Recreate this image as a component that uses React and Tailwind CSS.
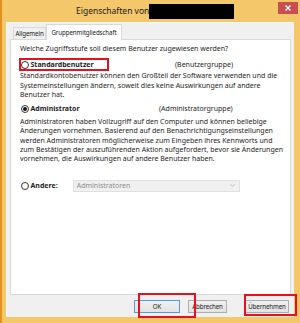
import React from 'react';

const FONT = "font-['Noto_Sans',sans-serif]";

function Radio({ checked }) {
  return (
    <span className="w-[8px] h-[8px] rounded-full border border-[#333] bg-white flex items-center justify-center shrink-0">
      {checked && <span className="w-[4px] h-[4px] rounded-full bg-[#111]" />}
    </span>
  );
}

function Button({ children, primary, w }) {
  return (
    <div
      className={`h-[13px] ${w} flex items-center justify-center text-[6.2px] tracking-[-0.1px] whitespace-nowrap text-[#1a1a1a] bg-gradient-to-b from-[#f0f0f0] to-[#e3e3e3] border ${
        primary ? 'border-[#4f9be6]' : 'border-[#adadad]'
      }`}
    >
      {children}
    </div>
  );
}

export default function App() {
  return (
    <div className={`relative w-[300px] h-[323px] overflow-hidden bg-[#f4c76b] border-l-2 border-[#e3921f] flex flex-col ${FONT}`}>
      {/* Titelleiste */}
      <div className="h-[22px] flex items-start shrink-0">
        <div className="w-[74px]" />
        <span className="mt-[4px] text-[8.5px] leading-[14px] text-[#1a1a1a] whitespace-nowrap">Eigenschaften von</span>
        <div className="mt-[4px] w-[85px] h-[15px] bg-black" />
        <div className="flex-1" />
        <div className="mt-[2px] mr-[2px] w-[20px] h-[12px] bg-[#c84f4f] flex items-center justify-center">
          <svg width="6" height="6" viewBox="0 0 6 6">
            <path d="M0.5 0.5 L5.5 5.5 M5.5 0.5 L0.5 5.5" stroke="white" strokeWidth="1.3" />
          </svg>
        </div>
      </div>

      {/* Client-Bereich */}
      <div className="flex-1 ml-[4px] mr-[6px] mb-[6px] bg-[#f0f0f0] border-t border-l border-[#f9f9f9] flex flex-col px-[3px]">
        {/* Reiter */}
        <div className="flex items-end h-[16px] pl-[3px]">
          <div className="h-[12px] w-[33px] flex items-center justify-center text-[6.2px] tracking-[-0.1px] whitespace-nowrap text-[#1a1a1a] bg-[#f0f0f0] border border-b-0 border-[#d9d9d9]">
            Allgemein
          </div>
          <div className="h-[16px] w-[76px] -mb-px relative z-10 flex items-center justify-center text-[6.2px] tracking-[-0.1px] whitespace-nowrap text-[#1a1a1a] bg-white border border-b-0 border-[#d9d9d9]">
            Gruppenmitgliedschaft
          </div>
        </div>

        {/* Seite */}
        <div className="h-[256px] bg-white border border-[#d9d9d9] pl-[9px] pr-[4px] text-[7px] leading-[9.3px] text-[#1e1e1e] whitespace-nowrap">
          <p className="mt-[4.3px]">Welche Zugriffsstufe soll diesem Benutzer zugewiesen werden?</p>

          <div className="mt-[5.4px] h-[12px] flex items-center">
            <div className="w-[155px] flex items-center gap-[2px] pl-[0.5px]">
              <Radio />
              <span className="font-bold">Standardbenutzer</span>
            </div>
            <span>(Benutzergruppe)</span>
          </div>
          <p className="mt-[0.3px]">
            Standardkontobenutzer können den Großteil der Software verwenden und die
            <br />
            Systemeinstellungen ändern, soweit dies keine Auswirkungen auf andere
            <br />
            Benutzer hat.
          </p>

          <div className="mt-[3.7px] h-[12px] flex items-center">
            <div className="w-[139px] flex items-center gap-[2px] pl-[0.5px]">
              <Radio checked />
              <span className="font-bold">Administrator</span>
            </div>
            <span>(Administratorgruppe)</span>
          </div>
          <p className="mt-[2.3px]">
            Administratoren haben Vollzugriff auf den Computer und können beliebige
            <br />
            Änderungen vornehmen. Basierend auf den Benachrichtigungseinstellungen
            <br />
            werden Administratoren möglicherweise zum Eingeben ihres Kennworts und
            <br />
            zum Bestätigen der auszuführenden Aktion aufgefordert, bevor sie Änderungen
            <br />
            vornehmen, die Auswirkungen auf andere Benutzer haben.
          </p>

          <div className="mt-[16px] h-[12px] flex items-center">
            <div className="w-[52.7px] flex items-center gap-[2px] pl-[0.5px]">
              <Radio />
              <span className="font-bold">Andere:</span>
            </div>
            <div className="w-[167px] h-[12px] bg-[#f0f0f0] border border-[#e0e0e0] flex items-center justify-between pl-[3px] pr-[4px] text-[#8c8c8c]">
              <span>Administratoren</span>
              <svg width="5" height="3" viewBox="0 0 5 3">
                <path d="M0.3 0.3 L2.5 2.5 L4.7 0.3" stroke="#b0b0b0" strokeWidth="0.8" fill="none" />
              </svg>
            </div>
          </div>
        </div>

        {/* Schaltflächen */}
        <div className="mt-[5px] flex justify-end pr-[2px] gap-[8px]">
          <Button primary w="w-[46px]">OK</Button>
          <Button w="w-[39px]">Abbrechen</Button>
          <div className="w-[2px]" />
          <Button w="w-[44px]">Übernehmen</Button>
        </div>
      </div>

      {/* rote Markierungen */}
      <div className="absolute left-[17px] top-[58px] w-[90px] h-[13px] border-2 border-[#e8101c]" />
      <div className="absolute left-[136px] top-[293px] w-[58px] h-[25px] border-2 border-[#e8101c]" />
      <div className="absolute left-[242px] top-[294px] w-[53px] h-[22px] border-2 border-[#e8101c]" />
    </div>
  );
}
